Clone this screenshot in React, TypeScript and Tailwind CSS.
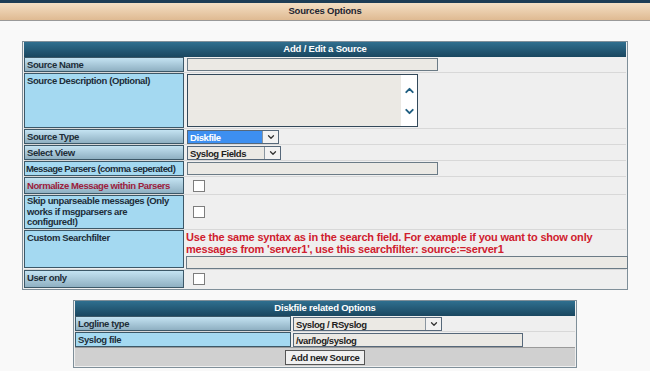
import { ChevronDown, ChevronUp } from "lucide-react";
import type { ReactNode } from "react";

const font = { fontFamily: '"Liberation Sans", Arial, sans-serif' };

const labelText = "text-[9.5px] font-bold tracking-[-0.4px]";

function Label({
  text,
  h,
  alt,
  red,
  lead = "leading-[11px] pt-[1px]",
}: {
  text: ReactNode;
  h: string;
  alt?: boolean;
  red?: boolean;
  lead?: string;
}) {
  return (
    <div
      className={`w-[160px] shrink-0 overflow-hidden border border-[#3c5868] px-[2px] ${labelText} ${lead} ${h} ${
        alt ? "bg-[#a4d9f1]" : "bg-gradient-to-b from-[#c4e3f2] to-[#8fb0c2]"
      } ${red ? "text-[#9c1c3c]" : "text-[#1d2d38]"}`}
    >
      {text}
    </div>
  );
}

function Select({ value, w, active }: { value: string; w: string; active?: boolean }) {
  return (
    <div className={`flex h-[14px] ${w} border border-[#56687a] bg-[#ebe9e4]`}>
      <div
        className={`flex-1 pl-[2px] pt-px leading-[11px] ${labelText} ${
          active ? "bg-[#3d8ff0] text-white" : "text-[#1d1d1d]"
        }`}
      >
        {value}
      </div>
      <div className="flex w-[16px] items-center justify-center border-l border-[#8a96a0] bg-[#f2f2f2]">
        <ChevronDown size={10} strokeWidth={3} color="#333" />
      </div>
    </div>
  );
}

function Checkbox() {
  return <div className="ml-[6px] h-[12px] w-[12px] border border-[#7d7d7d] bg-white" />;
}

export default function App() {
  return (
    <div className="min-h-[371px] w-[650px] bg-[#f9f9f9]" style={font}>
      <div className="h-[3px] bg-[#1e3d55]" />
      <div className="flex h-[18px] items-center justify-center border-b border-[#9a9a9a] bg-gradient-to-b from-[#f4dfc4] to-[#dfba92] text-[9.5px] font-bold tracking-[-0.2px] text-[#1d2430]">
        Sources Options
      </div>

      <div className="mx-[22px] mt-[20px] border border-[#7f8f99] bg-[#efefef] px-px pb-px">
        <div className="flex h-[15px] items-center justify-center bg-gradient-to-b from-[#2f6f8f] to-[#1a4760] text-[9.5px] font-bold tracking-[-0.2px] text-white">
          Add / Edit a Source
        </div>

        <div className="flex border-b border-[#d8d8d8]">
          <Label text="Source Name" h="h-[15px]" />
          <div className="flex flex-1 items-center pl-[3px]">
            <div className="h-[13px] w-[251px] border border-[#6b7b86] bg-[#ebe9e4]" />
          </div>
        </div>

        <div className="flex border-b border-[#d8d8d8]">
          <Label text="Source Description (Optional)" h="h-[55px]" alt />
          <div className="flex flex-1 items-center pl-[3px]">
            <div className="flex h-[53px] w-[231px] border border-[#33495a] bg-[#ebe9e4]">
              <div className="flex-1" />
              <div className="flex w-[16px] flex-col items-center justify-center gap-[8px] bg-white">
                <ChevronUp size={13} strokeWidth={3.5} color="#1f5e80" />
                <ChevronDown size={13} strokeWidth={3.5} color="#1f5e80" />
              </div>
            </div>
          </div>
        </div>

        <div className="flex border-b border-[#d8d8d8]">
          <Label text="Source Type" h="h-[15px]" />
          <div className="flex flex-1 items-center pl-[3px]">
            <Select value="Diskfile" w="w-[92px]" active />
          </div>
        </div>

        <div className="flex border-b border-[#d8d8d8]">
          <Label text="Select View" h="h-[15px]" />
          <div className="flex flex-1 items-center pl-[3px]">
            <Select value="Syslog Fields" w="w-[94px]" />
          </div>
        </div>

        <div className="flex border-b border-[#d8d8d8]">
          <div className="h-[15px] w-[160px] shrink-0 whitespace-nowrap border border-[#3c5868] bg-[#a4d9f1] px-[1px] pt-[1px] text-[9.5px] font-bold leading-[11px] tracking-[-0.55px] text-[#1d2d38]">
            Message Parsers (comma seperated)
          </div>
          <div className="flex flex-1 items-center pl-[3px]">
            <div className="h-[13px] w-[251px] border border-[#6b7b86] bg-[#ebe9e4]" />
          </div>
        </div>

        <div className="flex border-b border-[#d8d8d8]">
          <Label text="Normalize Message within Parsers" h="h-[17px]" red lead="leading-[13px] pt-[1px]" />
          <div className="flex flex-1 items-center pl-[3px]">
            <Checkbox />
          </div>
        </div>

        <div className="flex border-b border-[#d8d8d8]">
          <Label
            text={
              <>
                Skip unparseable messages (Only
                <br />
                works if msgparsers are
                <br />
                configured!)
              </>
            }
            h="h-[34px]"
            alt
            lead="leading-[10.5px] pt-0"
          />
          <div className="flex flex-1 items-center pl-[3px]">
            <Checkbox />
          </div>
        </div>

        <div className="flex border-b border-[#d8d8d8]">
          <Label text="Custom Searchfilter" h="h-[38px]" alt />
          <div className="flex flex-1 flex-col pl-[2px] pt-[1px]">
            <div className="text-[11px] font-bold leading-[12px] tracking-[-0.2px] text-[#d0202e]">
              Use the same syntax as in the search field. For example if you want to show only messages from
              'server1', use this searchfilter: source:=server1
            </div>
            <div className="mt-[1px] h-[13px] w-[442px] border border-[#6b7b86] bg-[#ebe9e4]" />
          </div>
        </div>

        <div className="flex">
          <Label text="User only" h="h-[18px]" lead="leading-[14px] pt-0" />
          <div className="flex flex-1 items-center pl-[3px]">
            <Checkbox />
          </div>
        </div>
      </div>

      <div className="mx-auto mt-[10px] w-[504px] border border-[#7f8f99] bg-[#efefef] px-px pb-px">
        <div className="flex h-[15px] items-center justify-center bg-gradient-to-b from-[#2f6f8f] to-[#1a4760] text-[9.5px] font-bold tracking-[-0.2px] text-white">
          Diskfile related Options
        </div>
        <div className="flex border-b border-[#d8d8d8]">
          <div className={`h-[15px] w-[216px] shrink-0 border border-[#3c5868] bg-gradient-to-b from-[#c4e3f2] to-[#8fb0c2] px-[2px] pt-[1px] leading-[11px] ${labelText} text-[#1d2d38]`}>
            Logline type
          </div>
          <div className="flex flex-1 items-center pl-[2px]">
            <Select value="Syslog / RSyslog" w="w-[149px]" />
          </div>
        </div>
        <div className="flex">
          <div className={`h-[15px] w-[216px] shrink-0 border border-[#3c5868] bg-[#a4d9f1] px-[2px] pt-[1px] leading-[11px] ${labelText} text-[#1d2d38]`}>
            Syslog file
          </div>
          <div className="flex flex-1 items-center pl-[2px]">
            <div className={`h-[14px] w-[230px] border border-[#56687a] bg-[#ebe9e4] pl-[2px] pt-px leading-[11px] ${labelText} text-[#1d1d1d]`}>
              /var/log/syslog
            </div>
          </div>
        </div>
        <div className="flex h-[19px] items-center justify-center border-t border-[#9a9a9a] bg-[#d0d0d0]">
          <div className={`border border-[#555] bg-[#f0f0f0] px-[5px] py-px leading-[11px] ${labelText} text-[#1d1d1d]`}>
            Add new Source
          </div>
        </div>
      </div>
    </div>
  );
}
